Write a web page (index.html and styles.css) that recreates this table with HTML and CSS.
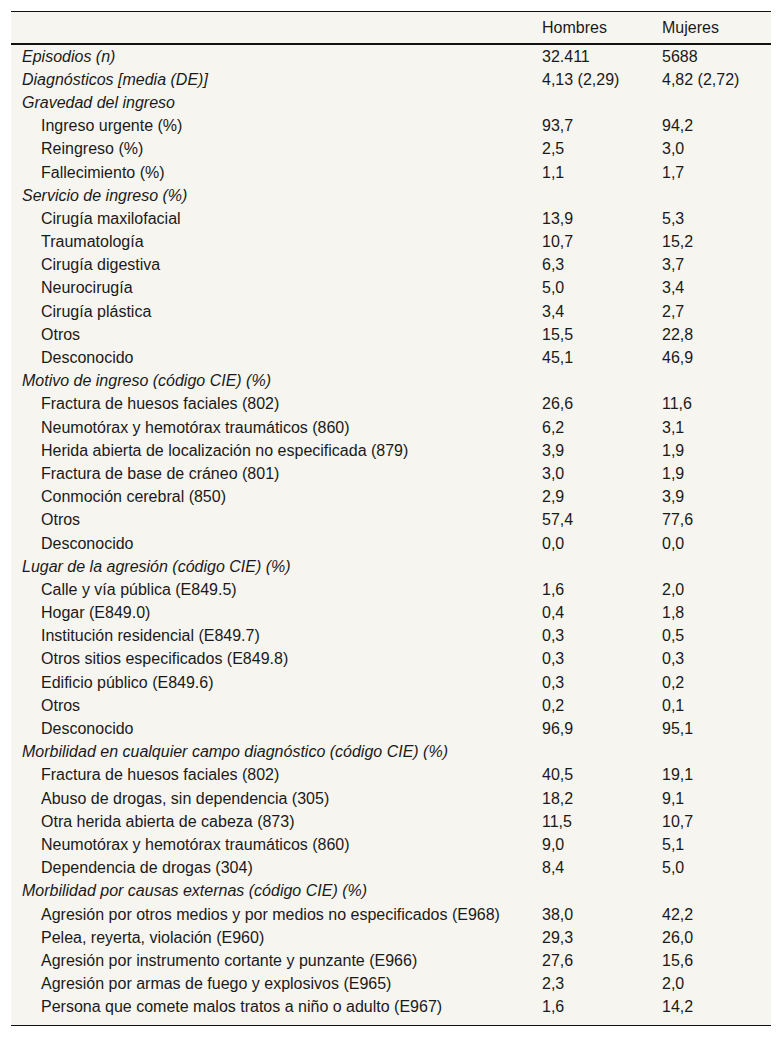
FILE: index.html
```html
<!DOCTYPE html>
<html lang="es">
<head>
<meta charset="utf-8">
<title>Tabla</title>
<link rel="stylesheet" href="styles.css">
</head>
<body>
<div class="page">
<div class="tblwrap">
<table class="tbl">
<colgroup><col class="c-label"><col class="c-h"><col class="c-m"></colgroup>
<thead>
<tr><th></th><th>Hombres</th><th>Mujeres</th></tr>
</thead>
<tbody>
<tr><td class="cat">Episodios (n)</td><td>32.411</td><td>5688</td></tr>
<tr><td class="cat">Diagnósticos [media (DE)]</td><td>4,13 (2,29)</td><td>4,82 (2,72)</td></tr>
<tr><td class="cat">Gravedad del ingreso</td><td></td><td></td></tr>
<tr><td class="sub">Ingreso urgente (%)</td><td>93,7</td><td>94,2</td></tr>
<tr><td class="sub">Reingreso (%)</td><td>2,5</td><td>3,0</td></tr>
<tr><td class="sub">Fallecimiento (%)</td><td>1,1</td><td>1,7</td></tr>
<tr><td class="cat">Servicio de ingreso (%)</td><td></td><td></td></tr>
<tr><td class="sub">Cirugía maxilofacial</td><td>13,9</td><td>5,3</td></tr>
<tr><td class="sub">Traumatología</td><td>10,7</td><td>15,2</td></tr>
<tr><td class="sub">Cirugía digestiva</td><td>6,3</td><td>3,7</td></tr>
<tr><td class="sub">Neurocirugía</td><td>5,0</td><td>3,4</td></tr>
<tr><td class="sub">Cirugía plástica</td><td>3,4</td><td>2,7</td></tr>
<tr><td class="sub">Otros</td><td>15,5</td><td>22,8</td></tr>
<tr><td class="sub">Desconocido</td><td>45,1</td><td>46,9</td></tr>
<tr><td class="cat">Motivo de ingreso (código CIE) (%)</td><td></td><td></td></tr>
<tr><td class="sub">Fractura de huesos faciales (802)</td><td>26,6</td><td>11,6</td></tr>
<tr><td class="sub">Neumotórax y hemotórax traumáticos (860)</td><td>6,2</td><td>3,1</td></tr>
<tr><td class="sub">Herida abierta de localización no especificada (879)</td><td>3,9</td><td>1,9</td></tr>
<tr><td class="sub">Fractura de base de cráneo (801)</td><td>3,0</td><td>1,9</td></tr>
<tr><td class="sub">Conmoción cerebral (850)</td><td>2,9</td><td>3,9</td></tr>
<tr><td class="sub">Otros</td><td>57,4</td><td>77,6</td></tr>
<tr><td class="sub">Desconocido</td><td>0,0</td><td>0,0</td></tr>
<tr><td class="cat">Lugar de la agresión (código CIE) (%)</td><td></td><td></td></tr>
<tr><td class="sub">Calle y vía pública (E849.5)</td><td>1,6</td><td>2,0</td></tr>
<tr><td class="sub">Hogar (E849.0)</td><td>0,4</td><td>1,8</td></tr>
<tr><td class="sub">Institución residencial (E849.7)</td><td>0,3</td><td>0,5</td></tr>
<tr><td class="sub">Otros sitios especificados (E849.8)</td><td>0,3</td><td>0,3</td></tr>
<tr><td class="sub">Edificio público (E849.6)</td><td>0,3</td><td>0,2</td></tr>
<tr><td class="sub">Otros</td><td>0,2</td><td>0,1</td></tr>
<tr><td class="sub">Desconocido</td><td>96,9</td><td>95,1</td></tr>
<tr><td class="cat">Morbilidad en cualquier campo diagnóstico (código CIE) (%)</td><td></td><td></td></tr>
<tr><td class="sub">Fractura de huesos faciales (802)</td><td>40,5</td><td>19,1</td></tr>
<tr><td class="sub">Abuso de drogas, sin dependencia (305)</td><td>18,2</td><td>9,1</td></tr>
<tr><td class="sub">Otra herida abierta de cabeza (873)</td><td>11,5</td><td>10,7</td></tr>
<tr><td class="sub">Neumotórax y hemotórax traumáticos (860)</td><td>9,0</td><td>5,1</td></tr>
<tr><td class="sub">Dependencia de drogas (304)</td><td>8,4</td><td>5,0</td></tr>
<tr><td class="cat">Morbilidad por causas externas (código CIE) (%)</td><td></td><td></td></tr>
<tr><td class="sub">Agresión por otros medios y por medios no especificados (E968)</td><td>38,0</td><td>42,2</td></tr>
<tr><td class="sub">Pelea, reyerta, violación (E960)</td><td>29,3</td><td>26,0</td></tr>
<tr><td class="sub">Agresión por instrumento cortante y punzante (E966)</td><td>27,6</td><td>15,6</td></tr>
<tr><td class="sub">Agresión por armas de fuego y explosivos (E965)</td><td>2,3</td><td>2,0</td></tr>
<tr><td class="sub">Persona que comete malos tratos a niño o adulto (E967)</td><td>1,6</td><td>14,2</td></tr>
</tbody>
</table>
</div>
</div>
</body>
</html>
```
FILE: styles.css
```css
html, body {
  margin: 0;
  padding: 0;
  background: #ffffff;
}
.page {
  padding: 11px 11px 0 11px;
  font-family: "Liberation Sans", Arial, sans-serif;
  font-size: 16px;
  color: #1a1a1a;
}
.tblwrap {
  width: 760px;
  background: #f7f5f0;
  border-top: 1px solid #111;
  border-bottom: 1px solid #111;
  padding-bottom: 6px;
}
.tbl {
  width: 760px;
  table-layout: fixed;
  border-collapse: collapse;
}
.c-label { width: 520px; }
.c-h { width: 120px; }
.c-m { width: 120px; }
.tbl th {
  font-weight: normal;
  text-align: left;
  height: 31px;
  padding: 0 11px;
  border-bottom: 2px solid #111;
  line-height: 18px;
}
.tbl td {
  padding: 0 11px;
  height: 23.2px;
  line-height: 18px;
  vertical-align: middle;
  white-space: nowrap;
}
.tbl td.cat { font-style: italic; }
.tbl td.sub { padding-left: 30px; }
```
